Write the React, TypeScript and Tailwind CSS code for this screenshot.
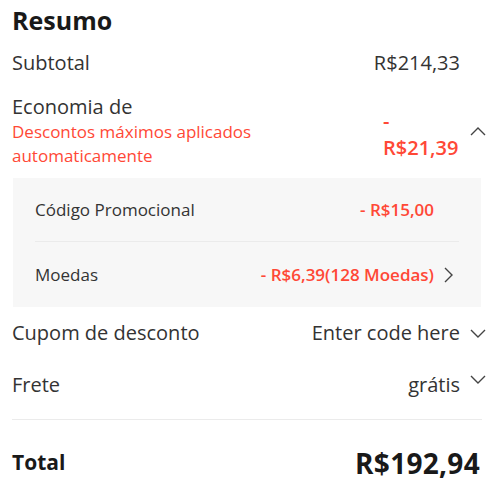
import React from "react";

type ChevronDir = "up" | "down" | "right";

function Chevron({ dir, className = "" }: { dir: ChevronDir; className?: string }) {
  const points =
    dir === "up" ? "1,8 8,1 15,8" : dir === "down" ? "1,1 8,8 15,1" : "1,1 8,8 1,15";
  const size = dir === "right" ? { w: 10, h: 16 } : { w: 16, h: 9 };
  return (
    <svg
      width={size.w}
      height={size.h}
      viewBox={`0 0 ${size.w} ${size.h}`}
      fill="none"
      stroke="#444"
      strokeWidth={1.4}
      className={className}
    >
      <polyline points={points} />
    </svg>
  );
}

export default function App() {
  return (
    <div className="w-[500px] bg-white pl-3 pr-[14px] pt-[4px] font-['Open_Sans',sans-serif] text-[#333]">
      <h2 className="text-[25px] font-bold leading-[32px] text-[#191919]">Resumo</h2>

      {/* Subtotal */}
      <div className="mt-[13px] flex items-center">
        <span className="flex-1 text-[20px] leading-[28px]">Subtotal</span>
        <span className="text-[20px] leading-[28px]">R$214,33</span>
        <span className="w-[26px]" />
      </div>

      {/* Economia */}
      <div className="mt-[17px] flex items-center">
        <div className="flex-1">
          <p className="text-[20px] leading-[26px]">Economia de</p>
          <p className="max-w-[250px] text-[17px] leading-[24px] text-[#ff4836]">
            Descontos máximos aplicados automaticamente
          </p>
        </div>
        <span className="w-[77px] pt-[5px] text-[20px] font-semibold leading-[27px] text-[#ff4836]">
          - R$21,39
        </span>
        <span className="flex w-[26px] justify-end">
          <Chevron dir="up" />
        </span>
      </div>

      {/* Detalhes */}
      <div className="mt-[10px] mr-[5px] ml-px bg-[#f7f7f7] px-[22px]">
        <div className="flex h-[64px] items-center border-b border-[#ebebeb]">
          <span className="flex-1 text-[17px]">Código Promocional</span>
          <span className="text-[17px] font-semibold text-[#ff4836]">- R$15,00</span>
          <span className="w-[25px]" />
        </div>
        <div className="flex h-[65px] items-center">
          <span className="flex-1 text-[17px]">Moedas</span>
          <span className="text-[17px] font-semibold text-[#ff4836]">- R$6,39(128 Moedas)</span>
          <span className="flex w-[25px] justify-end pr-[5px]">
            <Chevron dir="right" />
          </span>
        </div>
      </div>

      {/* Cupom */}
      <div className="mt-[12px] flex items-center">
        <span className="flex-1 text-[20px] leading-[28px]">Cupom de desconto</span>
        <span className="text-[20px] leading-[28px]">Enter code here</span>
        <span className="flex w-[26px] justify-end">
          <Chevron dir="down" />
        </span>
      </div>

      {/* Frete */}
      <div className="mt-[24px] flex items-start">
        <span className="flex-1 text-[20px] leading-[28px]">Frete</span>
        <span className="text-[20px] leading-[28px]">grátis</span>
        <span className="flex w-[26px] justify-end pt-[4px]">
          <Chevron dir="down" />
        </span>
      </div>

      <div className="mt-[20px] mr-[4px] border-t border-[#ebebeb]" />

      {/* Total */}
      <div className="mt-[25px] mr-[6px] flex items-center pb-[14px]">
        <span className="flex-1 text-[21px] font-bold text-[#191919]">Total</span>
        <span className="text-[28px] font-bold leading-[36px] tracking-[0.3px] text-[#191919]">
          R$192,94
        </span>
      </div>
    </div>
  );
}
